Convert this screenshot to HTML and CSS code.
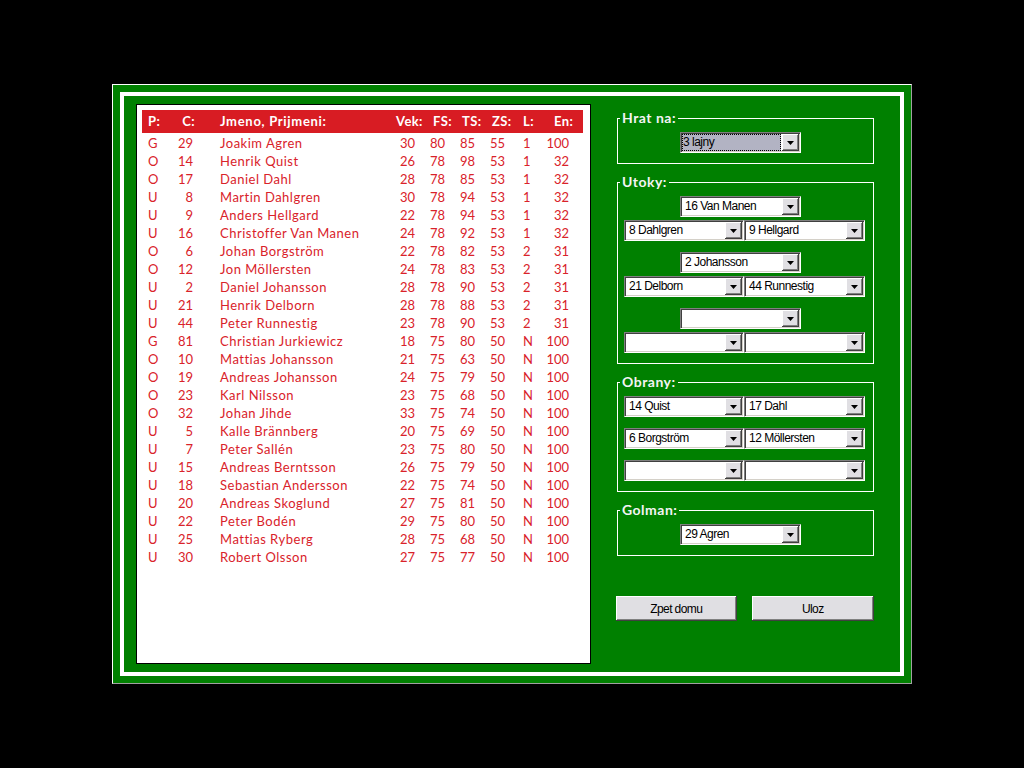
FILE: index.html
```html
<!DOCTYPE html>
<html>
<head>
<meta charset="utf-8">
<title>Sestava</title>
<link rel="stylesheet" href="styles.css">
</head>
<body>
<div class="window">
  <div class="frame">
    <div class="panel">
      <div class="grid thead">
        <span class="p">P:</span><span class="c">C:</span><span class="n">Jmeno, Prijmeni:</span><span class="v">Vek:</span><span class="fs">FS:</span><span class="ts">TS:</span><span class="zs">ZS:</span><span class="l">L:</span><span class="en">En:</span>
      </div>
      <div class="rows">
        <div class="grid row"><span class="p">G</span><span class="c">29</span><span class="n">Joakim Agren</span><span class="v">30</span><span class="fs">80</span><span class="ts">85</span><span class="zs">55</span><span class="l">1</span><span class="en">100</span></div>
        <div class="grid row"><span class="p">O</span><span class="c">14</span><span class="n">Henrik Quist</span><span class="v">26</span><span class="fs">78</span><span class="ts">98</span><span class="zs">53</span><span class="l">1</span><span class="en">32</span></div>
        <div class="grid row"><span class="p">O</span><span class="c">17</span><span class="n">Daniel Dahl</span><span class="v">28</span><span class="fs">78</span><span class="ts">85</span><span class="zs">53</span><span class="l">1</span><span class="en">32</span></div>
        <div class="grid row"><span class="p">U</span><span class="c">8</span><span class="n">Martin Dahlgren</span><span class="v">30</span><span class="fs">78</span><span class="ts">94</span><span class="zs">53</span><span class="l">1</span><span class="en">32</span></div>
        <div class="grid row"><span class="p">U</span><span class="c">9</span><span class="n">Anders Hellgard</span><span class="v">22</span><span class="fs">78</span><span class="ts">94</span><span class="zs">53</span><span class="l">1</span><span class="en">32</span></div>
        <div class="grid row"><span class="p">U</span><span class="c">16</span><span class="n">Christoffer Van Manen</span><span class="v">24</span><span class="fs">78</span><span class="ts">92</span><span class="zs">53</span><span class="l">1</span><span class="en">32</span></div>
        <div class="grid row"><span class="p">O</span><span class="c">6</span><span class="n">Johan Borgström</span><span class="v">22</span><span class="fs">78</span><span class="ts">82</span><span class="zs">53</span><span class="l">2</span><span class="en">31</span></div>
        <div class="grid row"><span class="p">O</span><span class="c">12</span><span class="n">Jon Möllersten</span><span class="v">24</span><span class="fs">78</span><span class="ts">83</span><span class="zs">53</span><span class="l">2</span><span class="en">31</span></div>
        <div class="grid row"><span class="p">U</span><span class="c">2</span><span class="n">Daniel Johansson</span><span class="v">28</span><span class="fs">78</span><span class="ts">90</span><span class="zs">53</span><span class="l">2</span><span class="en">31</span></div>
        <div class="grid row"><span class="p">U</span><span class="c">21</span><span class="n">Henrik Delborn</span><span class="v">28</span><span class="fs">78</span><span class="ts">88</span><span class="zs">53</span><span class="l">2</span><span class="en">31</span></div>
        <div class="grid row"><span class="p">U</span><span class="c">44</span><span class="n">Peter Runnestig</span><span class="v">23</span><span class="fs">78</span><span class="ts">90</span><span class="zs">53</span><span class="l">2</span><span class="en">31</span></div>
        <div class="grid row"><span class="p">G</span><span class="c">81</span><span class="n">Christian Jurkiewicz</span><span class="v">18</span><span class="fs">75</span><span class="ts">80</span><span class="zs">50</span><span class="l">N</span><span class="en">100</span></div>
        <div class="grid row"><span class="p">O</span><span class="c">10</span><span class="n">Mattias Johansson</span><span class="v">21</span><span class="fs">75</span><span class="ts">63</span><span class="zs">50</span><span class="l">N</span><span class="en">100</span></div>
        <div class="grid row"><span class="p">O</span><span class="c">19</span><span class="n">Andreas Johansson</span><span class="v">24</span><span class="fs">75</span><span class="ts">79</span><span class="zs">50</span><span class="l">N</span><span class="en">100</span></div>
        <div class="grid row"><span class="p">O</span><span class="c">23</span><span class="n">Karl Nilsson</span><span class="v">23</span><span class="fs">75</span><span class="ts">68</span><span class="zs">50</span><span class="l">N</span><span class="en">100</span></div>
        <div class="grid row"><span class="p">O</span><span class="c">32</span><span class="n">Johan Jihde</span><span class="v">33</span><span class="fs">75</span><span class="ts">74</span><span class="zs">50</span><span class="l">N</span><span class="en">100</span></div>
        <div class="grid row"><span class="p">U</span><span class="c">5</span><span class="n">Kalle Brännberg</span><span class="v">20</span><span class="fs">75</span><span class="ts">69</span><span class="zs">50</span><span class="l">N</span><span class="en">100</span></div>
        <div class="grid row"><span class="p">U</span><span class="c">7</span><span class="n">Peter Sallén</span><span class="v">23</span><span class="fs">75</span><span class="ts">80</span><span class="zs">50</span><span class="l">N</span><span class="en">100</span></div>
        <div class="grid row"><span class="p">U</span><span class="c">15</span><span class="n">Andreas Berntsson</span><span class="v">26</span><span class="fs">75</span><span class="ts">79</span><span class="zs">50</span><span class="l">N</span><span class="en">100</span></div>
        <div class="grid row"><span class="p">U</span><span class="c">18</span><span class="n">Sebastian Andersson</span><span class="v">22</span><span class="fs">75</span><span class="ts">74</span><span class="zs">50</span><span class="l">N</span><span class="en">100</span></div>
        <div class="grid row"><span class="p">U</span><span class="c">20</span><span class="n">Andreas Skoglund</span><span class="v">27</span><span class="fs">75</span><span class="ts">81</span><span class="zs">50</span><span class="l">N</span><span class="en">100</span></div>
        <div class="grid row"><span class="p">U</span><span class="c">22</span><span class="n">Peter Bodén</span><span class="v">29</span><span class="fs">75</span><span class="ts">80</span><span class="zs">50</span><span class="l">N</span><span class="en">100</span></div>
        <div class="grid row"><span class="p">U</span><span class="c">25</span><span class="n">Mattias Ryberg</span><span class="v">28</span><span class="fs">75</span><span class="ts">68</span><span class="zs">50</span><span class="l">N</span><span class="en">100</span></div>
        <div class="grid row"><span class="p">U</span><span class="c">30</span><span class="n">Robert Olsson</span><span class="v">27</span><span class="fs">75</span><span class="ts">77</span><span class="zs">50</span><span class="l">N</span><span class="en">100</span></div>
      </div>
    </div>

    <div class="side">
      <fieldset class="group">
        <legend>Hrat na:</legend>
        <div class="single">
          <div class="combo sel"><span class="txt">3 lajny</span><span class="arrow"><svg width="7" height="4" viewBox="0 0 7 4"><polygon points="0,0 7,0 3.5,4" fill="#000"/></svg></span></div>
        </div>
      </fieldset>

      <fieldset class="group">
        <legend>Utoky:</legend>
        <div class="single">
          <div class="combo"><span class="txt">16 Van Manen</span><span class="arrow"><svg width="7" height="4" viewBox="0 0 7 4"><polygon points="0,0 7,0 3.5,4" fill="#000"/></svg></span></div>
        </div>
        <div class="pair gap-s">
          <div class="combo left"><span class="txt">8 Dahlgren</span><span class="arrow"><svg width="7" height="4" viewBox="0 0 7 4"><polygon points="0,0 7,0 3.5,4" fill="#000"/></svg></span></div>
          <div class="combo"><span class="txt">9 Hellgard</span><span class="arrow"><svg width="7" height="4" viewBox="0 0 7 4"><polygon points="0,0 7,0 3.5,4" fill="#000"/></svg></span></div>
        </div>
        <div class="single gap-l">
          <div class="combo"><span class="txt">2 Johansson</span><span class="arrow"><svg width="7" height="4" viewBox="0 0 7 4"><polygon points="0,0 7,0 3.5,4" fill="#000"/></svg></span></div>
        </div>
        <div class="pair gap-s">
          <div class="combo left"><span class="txt">21 Delborn</span><span class="arrow"><svg width="7" height="4" viewBox="0 0 7 4"><polygon points="0,0 7,0 3.5,4" fill="#000"/></svg></span></div>
          <div class="combo"><span class="txt">44 Runnestig</span><span class="arrow"><svg width="7" height="4" viewBox="0 0 7 4"><polygon points="0,0 7,0 3.5,4" fill="#000"/></svg></span></div>
        </div>
        <div class="single gap-l">
          <div class="combo"><span class="txt"></span><span class="arrow"><svg width="7" height="4" viewBox="0 0 7 4"><polygon points="0,0 7,0 3.5,4" fill="#000"/></svg></span></div>
        </div>
        <div class="pair gap-s">
          <div class="combo left"><span class="txt"></span><span class="arrow"><svg width="7" height="4" viewBox="0 0 7 4"><polygon points="0,0 7,0 3.5,4" fill="#000"/></svg></span></div>
          <div class="combo"><span class="txt"></span><span class="arrow"><svg width="7" height="4" viewBox="0 0 7 4"><polygon points="0,0 7,0 3.5,4" fill="#000"/></svg></span></div>
        </div>
      </fieldset>

      <fieldset class="group">
        <legend>Obrany:</legend>
        <div class="pair">
          <div class="combo left"><span class="txt">14 Quist</span><span class="arrow"><svg width="7" height="4" viewBox="0 0 7 4"><polygon points="0,0 7,0 3.5,4" fill="#000"/></svg></span></div>
          <div class="combo"><span class="txt">17 Dahl</span><span class="arrow"><svg width="7" height="4" viewBox="0 0 7 4"><polygon points="0,0 7,0 3.5,4" fill="#000"/></svg></span></div>
        </div>
        <div class="pair gap-l">
          <div class="combo left"><span class="txt">6 Borgström</span><span class="arrow"><svg width="7" height="4" viewBox="0 0 7 4"><polygon points="0,0 7,0 3.5,4" fill="#000"/></svg></span></div>
          <div class="combo"><span class="txt">12 Möllersten</span><span class="arrow"><svg width="7" height="4" viewBox="0 0 7 4"><polygon points="0,0 7,0 3.5,4" fill="#000"/></svg></span></div>
        </div>
        <div class="pair gap-l">
          <div class="combo left"><span class="txt"></span><span class="arrow"><svg width="7" height="4" viewBox="0 0 7 4"><polygon points="0,0 7,0 3.5,4" fill="#000"/></svg></span></div>
          <div class="combo"><span class="txt"></span><span class="arrow"><svg width="7" height="4" viewBox="0 0 7 4"><polygon points="0,0 7,0 3.5,4" fill="#000"/></svg></span></div>
        </div>
      </fieldset>

      <fieldset class="group">
        <legend>Golman:</legend>
        <div class="single">
          <div class="combo"><span class="txt">29 Agren</span><span class="arrow"><svg width="7" height="4" viewBox="0 0 7 4"><polygon points="0,0 7,0 3.5,4" fill="#000"/></svg></span></div>
        </div>
      </fieldset>

      <div class="buttons">
        <button class="btn btn-back">Zpet domu</button>
        <button class="btn btn-save">Uloz</button>
      </div>
    </div>
  </div>
</div>
</body>
</html>
```

FILE: styles.css
```css
* { box-sizing: border-box; }

html, body {
  margin: 0;
  padding: 0;
  background: #000;
}

body {
  width: 1024px;
  height: 768px;
  display: flex;
  align-items: center;
  justify-content: center;
}

.window {
  width: 800px;
  height: 600px;
  background: #008000;
  border: 1px solid;
  border-color: #ffffff #a0a0a0 #a0a0a0 #ffffff;
  padding: 7px;
}

.frame {
  height: 100%;
  border: 4px solid #fff;
  display: flex;
  align-items: flex-start;
  padding: 8px 0 0 12px;
}

/* ---------- player table ---------- */
.panel {
  flex: none;
  width: 455px;
  height: 560px;
  background: #fff;
  border: 1px solid #000;
  padding: 5px 7px 0 5px;
  font-family: Lato, "Open Sans", sans-serif;
  font-size: 13px;
  color: #d9222a;
}

.grid {
  display: grid;
  grid-template-columns: 34px 20px 194px 26px 30px 30px 30px 24px 53px;
  white-space: nowrap;
}

.thead {
  background: #d81c23;
  color: #fff;
  font-weight: bold;
  height: 23px;
  line-height: 23px;
  letter-spacing: 0.4px;
}

.rows { margin-top: 1px; }

.row {
  height: 18px;
  line-height: 18px;
}

.p { padding-left: 6px; }
.c { text-align: right; padding-right: 3px; }
.n { padding-left: 24px; letter-spacing: 0.5px; }
.v, .fs, .ts, .zs { text-align: right; padding-right: 1px; }
.l { padding-left: 17px; }
.en { text-align: right; padding-right: 14px; }

.thead .c { padding-right: 1px; }
.thead .n { letter-spacing: 0.7px; }
.thead .v, .thead .fs, .thead .ts, .thead .zs, .thead .en { text-align: left; padding-right: 0; }
.thead .v { padding-left: 6px; }
.thead .fs { padding-left: 17px; }
.thead .ts { padding-left: 16px; }
.thead .zs { padding-left: 16px; }
.thead .en { padding-left: 24px; }

/* ---------- side controls ---------- */
.side {
  flex: none;
  width: 257px;
  margin: 6px 0 0 26px;
  font-family: "Liberation Sans", Arial, sans-serif;
}

.group {
  margin: 0;
  min-width: 0;
  border: 1px solid #fff;
  padding: 6px 0 10px 6px;
}

.group + .group { margin-top: 10px; }

.group legend {
  margin-left: -4px;
  padding: 0 2px;
  font-family: Lato, "Open Sans", sans-serif;
  font-weight: bold;
  font-size: 14px;
  line-height: 16px;
  letter-spacing: 0.5px;
  color: #f4f4f4;
}

.single { padding-left: 56px; }
.pair { display: flex; }
.gap-s { margin-top: 3px; }
.gap-l { margin-top: 11px; }

.combo {
  width: 121px;
  height: 21px;
  display: flex;
  background: #fff;
  border: 1px solid;
  border-color: #808080 #ffffff #ffffff #808080;
  box-shadow: inset 1px 1px #404040, inset -1px -1px #d4d0c8;
  padding: 1px;
}

.combo.left { width: 120px; }

.combo .txt {
  flex: 1;
  min-width: 0;
  padding-left: 3px;
  font-size: 12px;
  line-height: 17px;
  letter-spacing: -0.5px;
  color: #000;
  white-space: nowrap;
  overflow: hidden;
}

.combo.sel .txt {
  background: #b2b3c3;
  outline: 1px dotted #000;
  outline-offset: -1px;
  padding-left: 1px;
  margin-right: 1px;
}

.combo .arrow {
  flex: none;
  width: 17px;
  height: 17px;
  background: #e0dfe3;
  box-shadow: inset -1px -1px #404040, inset 1px 1px #ffffff, inset -2px -2px #808080;
  display: flex;
  align-items: center;
  justify-content: center;
}

.combo .arrow svg { display: block; }

.buttons {
  display: flex;
  gap: 15px;
  margin: 40px 0 0 -1px;
}

.btn {
  height: 25px;
  padding: 0;
  border: none;
  background: #e0dfe3;
  box-shadow: inset -1px -1px #404040, inset 1px 1px #ffffff, inset -2px -2px #808080;
  font-family: "Liberation Sans", Arial, sans-serif;
  font-size: 12px;
  letter-spacing: -0.6px;
  color: #000;
}

.btn-back { width: 121px; }
.btn-save { width: 123px; }
```
